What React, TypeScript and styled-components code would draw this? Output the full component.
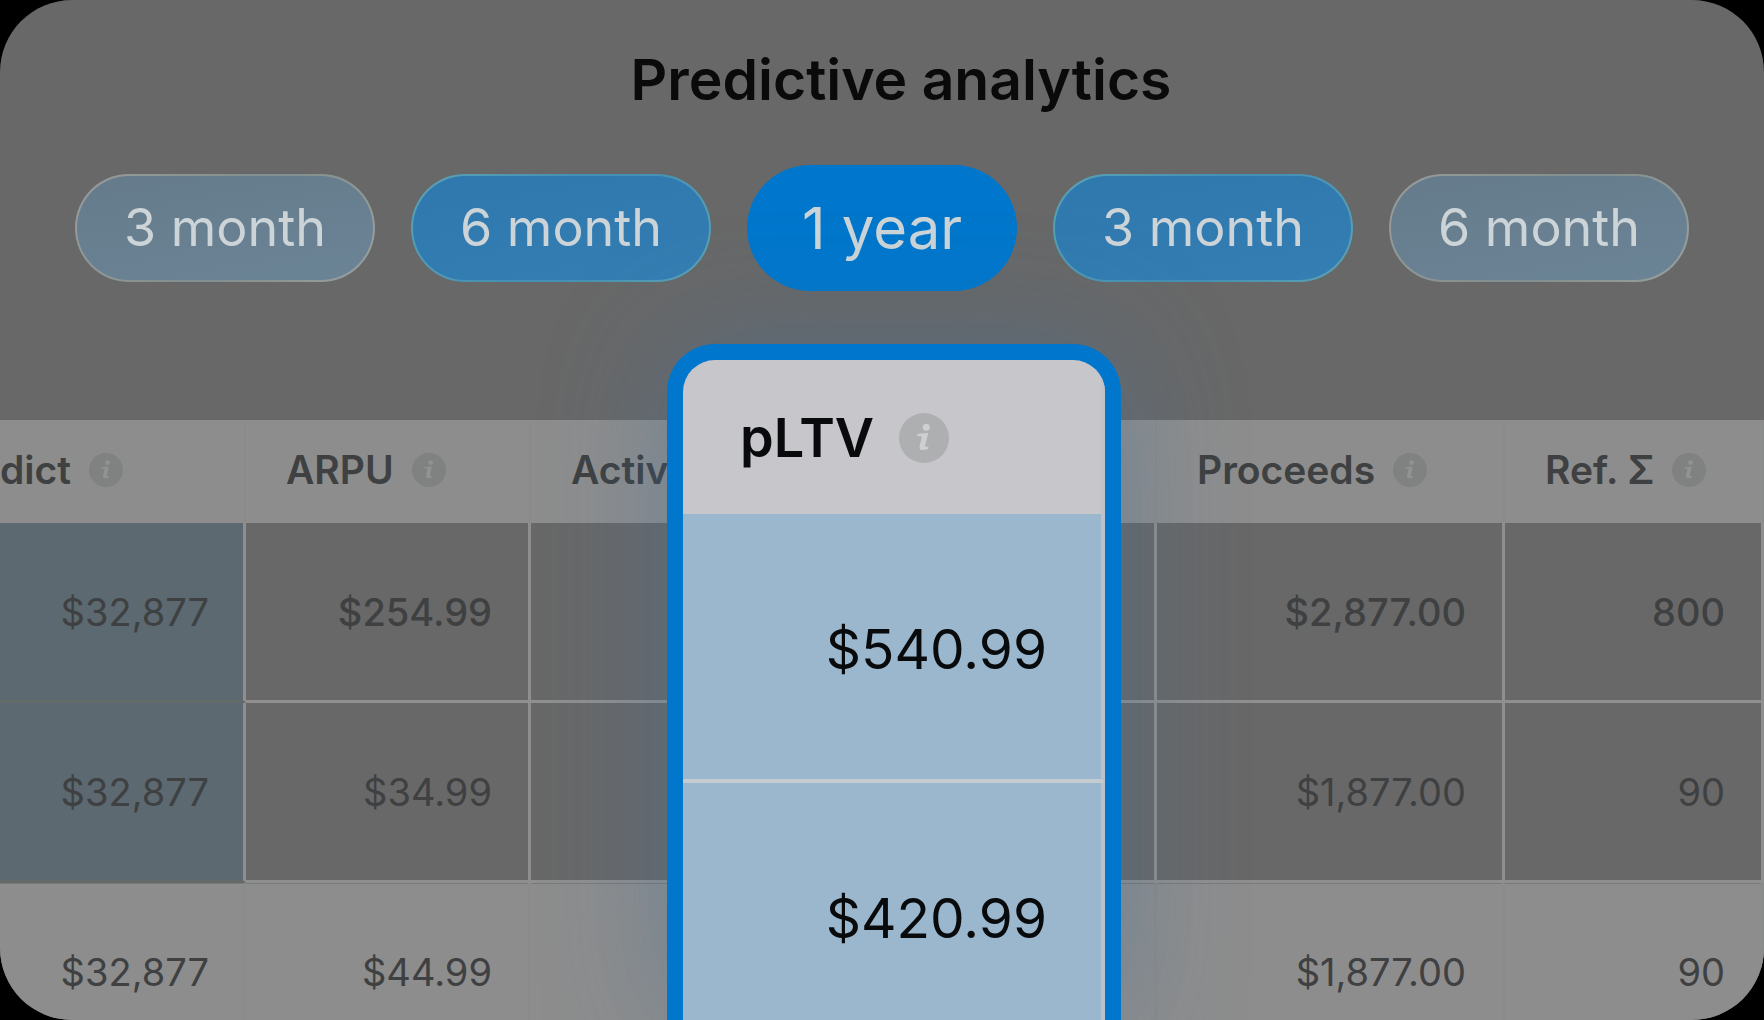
import React from "react";
import styled, { createGlobalStyle } from "styled-components";

const blue = "#0077cc";
const font = `Inter, "Liberation Sans", sans-serif`;

const GlobalStyle = createGlobalStyle`
  *, *::before, *::after { box-sizing: border-box; }
  body { margin: 0; background: #000; }
`;

const Panel = styled.main`
  position: relative;
  display: flex;
  flex-direction: column;
  height: 100vh;
  overflow: hidden;
  border-radius: 72px;
  background: #686868;
  font-family: ${font};
`;

const Title = styled.h1`
  margin: 0;
  padding: 44px 0 48px 38px;
  text-align: center;
  font-size: 57px;
  font-weight: 600;
  line-height: 72px;
  color: #0a0a0a;
`;

const Periods = styled.div`
  display: flex;
  flex: none;
  justify-content: center;
  align-items: center;
  gap: 36px;
  height: 128px;
  margin-bottom: 128px;
`;

type Tone = "faint" | "soft" | "active";

const fills: Record<Tone, string> = {
  faint:
    "linear-gradient(170deg, #657b8c, #6b8495) padding-box, linear-gradient(125deg, #989c9c, #84908f 45%, #84908f 60%, #9aa0a0) border-box, #6a7f8e",
  soft:
    "linear-gradient(170deg, #2e78ae, #357eb3) padding-box, linear-gradient(125deg, #5ba3b4, #4490b4 45%, #4490b4 60%, #5ba3b4) border-box",
  active: blue,
};

const Period = styled.button<{ $tone: Tone }>`
  flex: none;
  width: ${(p) => (p.$tone === "active" ? 270 : 300)}px;
  height: ${(p) => (p.$tone === "active" ? 126 : 108)}px;
  padding: 0;
  border: ${(p) => (p.$tone === "active" ? 0 : 2)}px solid transparent;
  border-radius: 64px;
  background: ${(p) => fills[p.$tone]};
  color: #ccd4d8;
  font-family: inherit;
  font-size: ${(p) => (p.$tone === "active" ? 58 : 52)}px;
  font-weight: 400;
  line-height: 64px;
`;

const Table = styled.table`
  width: 100%;
  table-layout: fixed;
  border-collapse: separate;
  border-spacing: 0;
  color: #3e4041;
`;

const Col = styled.col<{ $width?: number }>`
  width: ${(p) => (p.$width ? `${p.$width}px` : "auto")};
`;

const HeadCell = styled.th<{ $flush?: boolean }>`
  height: 103px;
  padding: 0 0 4px ${(p) => (p.$flush ? 0 : 40)}px;
  border-right: 2px solid #8a8b8b;
  background: #8d8d8d;
  text-align: left;
  font-size: 39px;
  font-weight: 600;
  line-height: 48px;
  white-space: nowrap;
`;

const HeadLabel = styled.span`
  display: flex;
  align-items: center;
  gap: 18px;
`;

const Row = styled.tr<{ $light?: boolean }>`
  --fill: ${(p) => (p.$light ? "#8d8d8d" : "transparent")};
  --line: ${(p) => (p.$light ? "#8a8b8b" : "#8f8f8f")};
  --marked: ${(p) => (p.$light ? "#8d8d8d" : "#5c6970")};
  --marked-line: ${(p) => (p.$light ? "#8d8d8d" : "#646969")};
  --edge: ${(p) => (p.$light ? "#787979" : "transparent")};
`;

const Cell = styled.td<{ $marked?: boolean; $strong?: boolean }>`
  height: 180px;
  padding: 1px ${(p) => (p.$marked ? 34 : 36)}px 0 0;
  border-right: 3px solid var(--line);
  border-bottom: 3px solid ${(p) => (p.$marked ? "var(--marked-line)" : "var(--line)")};
  background: ${(p) => (p.$marked ? "var(--marked)" : "var(--fill)")};
  box-shadow: inset 0 1px var(--edge);
  text-align: right;
  font-size: 38px;
  font-weight: ${(p) => (p.$strong ? 500 : 400)};
  line-height: 48px;
`;

const Spotlight = styled.section`
  position: absolute;
  top: 344px;
  bottom: 0;
  left: calc(50% - 215px);
  width: 454px;
  overflow: hidden;
  border: 16px solid ${blue};
  border-bottom: 0;
  border-radius: 48px 48px 0 0;
  background: #c7c6ca;
  box-shadow: 0 0 120px rgba(60, 112, 160, 0.38);
`;

const SpotTable = styled.table`
  width: 100%;
  border-collapse: separate;
  border-spacing: 0;
  color: #080a0c;
`;

const SpotHead = styled.th`
  height: 154px;
  padding: 2px 0 0 57px;
  border-right: 4px solid #c2c1c6;
  text-align: left;
  font-size: 54px;
  font-weight: 600;
  line-height: 64px;
`;

const SpotLabel = styled.span`
  display: flex;
  align-items: center;
  gap: 25px;
`;

const SpotCell = styled.td`
  height: 269px;
  padding: 4px 54px 0 0;
  border-right: 4px solid #bfc1c8;
  border-bottom: 4px solid #c6cbd0;
  background: #9ab7ce;
  text-align: right;
  font-size: 55px;
  font-weight: 400;
  line-height: 64px;
`;

const IconSvg = styled.svg`
  display: block;
  flex: none;
`;

function InfoIcon({ size, disc, mark }: { size: number; disc: string; mark: string }) {
  return (
    <IconSvg width={size} height={size} viewBox="0 0 24 24" aria-hidden="true">
      <circle cx="12" cy="12" r="12" fill={disc} />
      <circle cx="13.1" cy="6.8" r="1.7" fill={mark} />
      <path
        fill={mark}
        d="M9 9.9 L14 9.6 L12.6 15.6 Q12.5 16.5 14.2 16.1 L13.9 17.3 Q9.4 18.7 9.9 15.9 L11 11.2 L8.8 11 Z"
      />
    </IconSvg>
  );
}

const periods: { label: string; tone: Tone }[] = [
  { label: "3 month", tone: "faint" },
  { label: "6 month", tone: "soft" },
  { label: "1 year", tone: "active" },
  { label: "3 month", tone: "soft" },
  { label: "6 month", tone: "faint" },
];

const columns = [
  { label: "dict", width: 246 },
  { label: "ARPU", width: 285 },
  { label: "Activ" },
  { label: "Proceeds", width: 348 },
  { label: "Ref. Σ", width: 259 },
];

const rows = [
  ["$32,877", "$254.99", "", "$2,877.00", "800"],
  ["$32,877", "$34.99", "", "$1,877.00", "90"],
  ["$32,877", "$44.99", "", "$1,877.00", "90"],
];

export default function App() {
  return (
    <>
      <GlobalStyle />
      <Panel>
        <Title>Predictive analytics</Title>
        <Periods>
          {periods.map((p, i) => (
            <Period key={i} type="button" $tone={p.tone} aria-pressed={p.tone === "active"}>
              {p.label}
            </Period>
          ))}
        </Periods>
        <Table>
          <colgroup>
            {columns.map((c) => (
              <Col key={c.label} $width={c.width} />
            ))}
          </colgroup>
          <thead>
            <tr>
              {columns.map((c, i) => (
                <HeadCell key={c.label} scope="col" $flush={i === 0}>
                  <HeadLabel>
                    {c.label}
                    {c.width && <InfoIcon size={34} disc="#808181" mark="#919292" />}
                  </HeadLabel>
                </HeadCell>
              ))}
            </tr>
          </thead>
          <tbody>
            {rows.map((row, r) => (
              <Row key={r} $light={r === 2}>
                {row.map((value, c) => (
                  <Cell key={c} $marked={c === 0} $strong={r === 0 && c > 0}>
                    {value}
                  </Cell>
                ))}
              </Row>
            ))}
          </tbody>
        </Table>
        <Spotlight>
          <SpotTable>
            <thead>
              <tr>
                <SpotHead scope="col">
                  <SpotLabel>
                    pLTV
                    <InfoIcon size={50} disc="#aeafb1" mark="#cfcfd1" />
                  </SpotLabel>
                </SpotHead>
              </tr>
            </thead>
            <tbody>
              <tr>
                <SpotCell>$540.99</SpotCell>
              </tr>
              <tr>
                <SpotCell>$420.99</SpotCell>
              </tr>
            </tbody>
          </SpotTable>
        </Spotlight>
      </Panel>
    </>
  );
}
